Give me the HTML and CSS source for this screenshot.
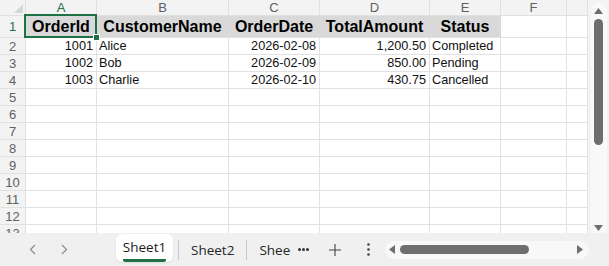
FILE: index.html
```html
<!DOCTYPE html>
<html lang="en">
<head>
    <meta charset="UTF-8">
    <title>Orders - Sheet1</title>
    <link rel="stylesheet" href="styles.css">
</head>
<body>

<div class="app">
    <div class="sheet-area">
        <div class="grid">
            <!-- column headers -->
            <div class="corner"></div>
            <div class="col-head active">A</div>
            <div class="col-head">B</div>
            <div class="col-head">C</div>
            <div class="col-head">D</div>
            <div class="col-head">E</div>
            <div class="col-head">F</div>
            <div class="col-head"></div>

            <!-- row 1 : titles -->
            <div class="row-head active">1</div>
            <div class="cell title sel">OrderId</div>
            <div class="cell title">CustomerName</div>
            <div class="cell title">OrderDate</div>
            <div class="cell title">TotalAmount</div>
            <div class="cell title">Status</div>
            <div class="cell"></div>
            <div class="cell"></div>

            <div class="row-head">2</div>
            <div class="cell num">1001</div>
            <div class="cell">Alice</div>
            <div class="cell num">2026-02-08</div>
            <div class="cell num">1,200.50</div>
            <div class="cell">Completed</div>
            <div class="cell"></div>
            <div class="cell"></div>

            <div class="row-head">3</div>
            <div class="cell num">1002</div>
            <div class="cell">Bob</div>
            <div class="cell num">2026-02-09</div>
            <div class="cell num">850.00</div>
            <div class="cell">Pending</div>
            <div class="cell"></div>
            <div class="cell"></div>

            <div class="row-head">4</div>
            <div class="cell num">1003</div>
            <div class="cell">Charlie</div>
            <div class="cell num">2026-02-10</div>
            <div class="cell num">430.75</div>
            <div class="cell">Cancelled</div>
            <div class="cell"></div>
            <div class="cell"></div>

            <div class="row-head">5</div>
            <div class="cell"></div><div class="cell"></div><div class="cell"></div><div class="cell"></div><div class="cell"></div><div class="cell"></div><div class="cell"></div>
            <div class="row-head">6</div>
            <div class="cell"></div><div class="cell"></div><div class="cell"></div><div class="cell"></div><div class="cell"></div><div class="cell"></div><div class="cell"></div>
            <div class="row-head">7</div>
            <div class="cell"></div><div class="cell"></div><div class="cell"></div><div class="cell"></div><div class="cell"></div><div class="cell"></div><div class="cell"></div>
            <div class="row-head">8</div>
            <div class="cell"></div><div class="cell"></div><div class="cell"></div><div class="cell"></div><div class="cell"></div><div class="cell"></div><div class="cell"></div>
            <div class="row-head">9</div>
            <div class="cell"></div><div class="cell"></div><div class="cell"></div><div class="cell"></div><div class="cell"></div><div class="cell"></div><div class="cell"></div>
            <div class="row-head">10</div>
            <div class="cell"></div><div class="cell"></div><div class="cell"></div><div class="cell"></div><div class="cell"></div><div class="cell"></div><div class="cell"></div>
            <div class="row-head">11</div>
            <div class="cell"></div><div class="cell"></div><div class="cell"></div><div class="cell"></div><div class="cell"></div><div class="cell"></div><div class="cell"></div>
            <div class="row-head">12</div>
            <div class="cell"></div><div class="cell"></div><div class="cell"></div><div class="cell"></div><div class="cell"></div><div class="cell"></div><div class="cell"></div>
            <div class="row-head">13</div>
            <div class="cell"></div><div class="cell"></div><div class="cell"></div><div class="cell"></div><div class="cell"></div><div class="cell"></div><div class="cell"></div>
        </div>

        <div class="vscroll">
            <div class="vtrack">
                <svg class="arrow" width="9" height="6" viewBox="0 0 9 6"><path d="M4.5 0 L9 6 L0 6 Z" fill="#6e6e6e"/></svg>
                <div class="vthumb"></div>
                <div class="vspace"></div>
                <svg class="arrow" width="9" height="6" viewBox="0 0 9 6"><path d="M0 0 L9 0 L4.5 6 Z" fill="#6e6e6e"/></svg>
            </div>
        </div>
    </div>

    <div class="tabbar">
        <div class="nav">
            <svg width="7" height="11" viewBox="0 0 7 11"><path d="M6 1 L1.5 5.5 L6 10" fill="none" stroke="#8c8c8c" stroke-width="1.2"/></svg>
        </div>
        <div class="nav">
            <svg width="7" height="11" viewBox="0 0 7 11"><path d="M1 1 L5.5 5.5 L1 10" fill="none" stroke="#8c8c8c" stroke-width="1.2"/></svg>
        </div>

        <div class="tab current"><span>Sheet1</span></div>
        <div class="sep first"></div>
        <div class="tab">Sheet2</div>
        <div class="sep"></div>
        <div class="tab cut">Shee</div>
        <div class="more"><i></i><i></i><i></i></div>

        <svg class="add" width="12" height="12" viewBox="0 0 12 12"><path d="M6 0 V12 M0 6 H12" stroke="#444" stroke-width="1.1"/></svg>
        <svg class="kebab" width="3" height="13" viewBox="0 0 3 13"><circle cx="1.5" cy="1.5" r="1.3" fill="#444"/><circle cx="1.5" cy="6.5" r="1.3" fill="#444"/><circle cx="1.5" cy="11.5" r="1.3" fill="#444"/></svg>

        <div class="hscroll">
            <svg width="6" height="9" viewBox="0 0 6 9"><path d="M6 0 L6 9 L0 4.5 Z" fill="#6e6e6e"/></svg>
            <div class="hthumb"></div>
            <div class="hspace"></div>
            <svg width="6" height="9" viewBox="0 0 6 9"><path d="M0 0 L6 4.5 L0 9 Z" fill="#6e6e6e"/></svg>
        </div>
    </div>
</div>

</body>
</html>
```

FILE: styles.css
```css
body {
    margin: 0;
    background-color: #f3f3f3;
    font-family: "Liberation Sans", Arial, sans-serif;
}
.app {
    width: 609px;
    height: 266px;
    display: flex;
    flex-direction: column;
    overflow: hidden;
}
.sheet-area {
    display: flex;
    height: 233px;
}
.grid {
    display: grid;
    grid-template-columns: 26px 71px 132px 91px 110px 71px 66px 21px;
    grid-template-rows: 16px 22px repeat(12, 17px);
    height: 233px;
    overflow: hidden;
    background-color: #ffffff;
}
.grid > div {
    box-sizing: border-box;
    border-right: 1px solid #e1e1e1;
    border-bottom: 1px solid #e1e1e1;
    white-space: nowrap;
    overflow: hidden;
}
.corner {
    background-color: #f3f3f3;
    position: relative;
}
.corner::after {
    content: "";
    position: absolute;
    right: 2px;
    bottom: 2px;
    border-left: 9px solid transparent;
    border-bottom: 9px solid #d6d6d6;
}
.col-head {
    background-color: #f3f3f3;
    color: #616161;
    font-size: 13px;
    line-height: 15px;
    text-align: center;
}
.row-head {
    background-color: #f3f3f3;
    color: #616161;
    font-size: 13px;
    text-align: center;
    display: flex;
    align-items: center;
    justify-content: center;
}
.active {
    color: #1e7145;
}
.cell {
    font-size: 12.7px;
    color: #111;
    padding: 0 2px;
    line-height: 16px;
}
.cell.num {
    text-align: right;
    padding-right: 3px;
}
.cell.title {
    background-color: #d9d9d9;
    border-right-color: #d9d9d9 !important;
    font-size: 16px;
    font-weight: bold;
    text-align: center;
    line-height: 21px;
    color: #000;
}
.grid > .sel {
    overflow: visible;
    position: relative;
}
.sel::after {
    content: "";
    position: absolute;
    top: -2px;
    left: -2px;
    right: -1px;
    bottom: -1px;
    border: 2px solid #1e7145;
}
.sel::before {
    content: "";
    position: absolute;
    right: -4px;
    bottom: -4px;
    width: 5px;
    height: 5px;
    background-color: #1e7145;
    border: 1px solid #ffffff;
    z-index: 1;
}
.vscroll {
    width: 21px;
    background-color: #f3f3f3;
    display: flex;
    justify-content: center;
    padding-top: 3px;
}
.vtrack {
    width: 16px;
    height: 232px;
    background-color: #f9f9f9;
    border-radius: 8px;
    display: flex;
    flex-direction: column;
    align-items: center;
    padding-top: 5px;
    box-sizing: border-box;
}
.vthumb {
    width: 9px;
    height: 126px;
    margin-top: 5px;
    background-color: #6e6e6e;
    border-radius: 5px;
}
.vspace {
    flex: 1;
}
.vtrack .arrow:last-child {
    margin-bottom: 4px;
}
.tabbar {
    height: 33px;
    display: flex;
    align-items: center;
    background-color: #f0f0f0;
    font-family: "Open Sans", "Noto Sans", sans-serif;
    font-size: 13.5px;
    color: #262626;
}
.nav {
    width: 32px;
    display: flex;
    justify-content: center;
}
.nav:first-child {
    margin-left: 16px;
}
.tab {
    margin-left: 12px;
    line-height: 20px;
}
.tab.current {
    margin-left: 36px;
    align-self: flex-start;
    margin-top: 1px;
    width: 57px;
    height: 28px;
    background-color: #ffffff;
    border-radius: 6px;
    box-shadow: 0 1px 2px rgba(0, 0, 0, 0.08);
    display: flex;
    justify-content: center;
    padding-top: 3px;
    box-sizing: border-box;
}
.tab.current span {
    height: 22px;
    border-bottom: 3px solid #1e7145;
    border-radius: 0 0 2px 2px;
    color: #1a1a1a;
}
.sep {
    width: 1px;
    height: 20px;
    background-color: #c8c8c8;
    margin-left: 12px;
}
.sep.first {
    margin-left: 5px;
}
.more {
    display: flex;
    gap: 1px;
    margin-left: 8px;
}
.more i {
    width: 3px;
    height: 3px;
    border-radius: 50%;
    background-color: #333;
}
.add {
    margin-left: 20px;
}
.kebab {
    margin-left: 26px;
}
.hscroll {
    margin-left: 15px;
    width: 204px;
    height: 18px;
    background-color: #f8f8f8;
    border-radius: 9px;
    display: flex;
    align-items: center;
    padding: 0 6px 0 4px;
    box-sizing: border-box;
}
.hthumb {
    width: 129px;
    height: 9px;
    margin-left: 5px;
    background-color: #6e6e6e;
    border-radius: 5px;
}
.hspace {
    flex: 1;
}
```
